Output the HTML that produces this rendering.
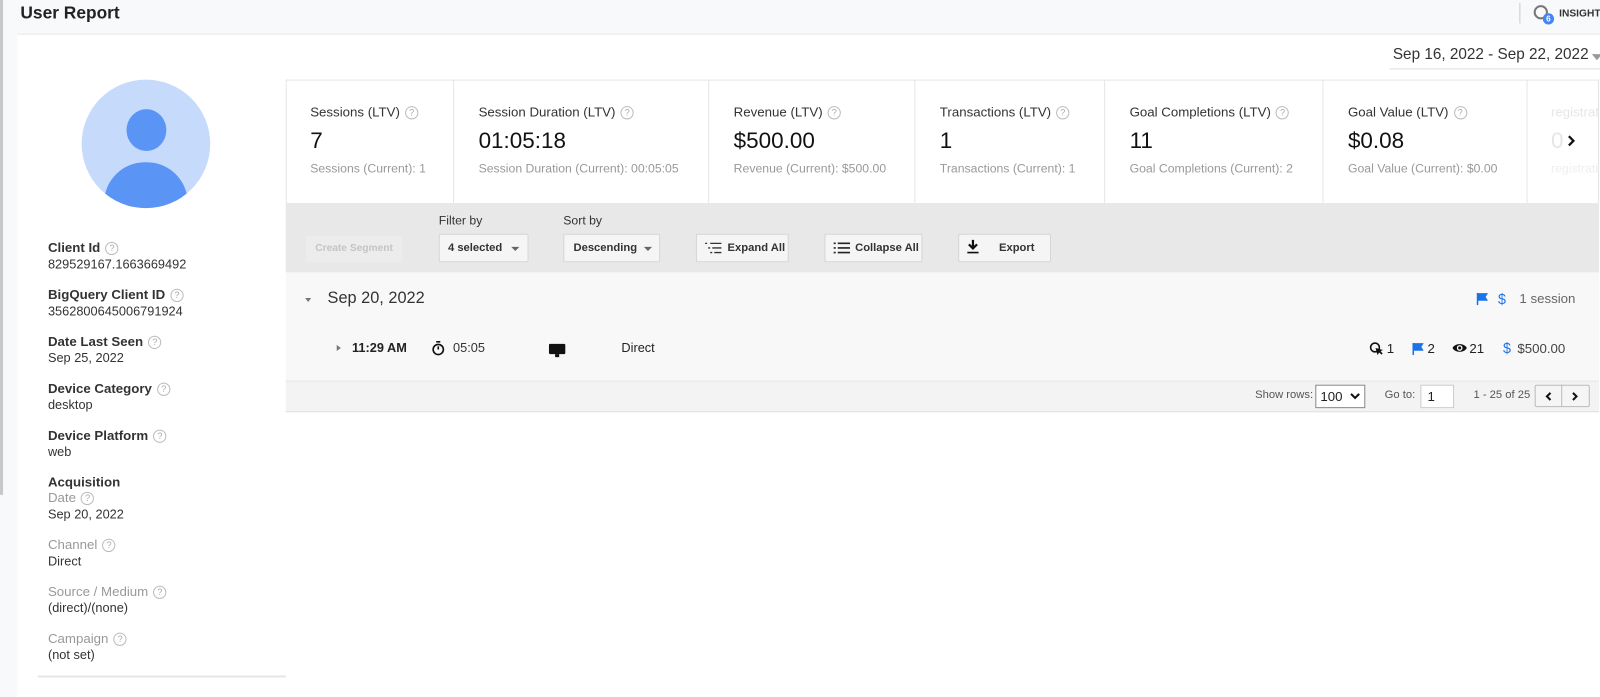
<!DOCTYPE html>
<html><head><meta charset="utf-8"><style>
*{box-sizing:border-box;margin:0;padding:0}
body{width:1600px;height:683px;overflow:hidden;background:#f8f9fa;font-family:"Liberation Sans",Arial,sans-serif;color:#212121;position:relative}
#w{position:absolute;left:0;top:0;width:1568px;height:670px;transform:scale(1.0204);transform-origin:0 0}
.a{position:absolute;white-space:nowrap}
.q{display:inline-block;width:13px;height:13px;border:1px solid #bbb;border-radius:50%;font-size:9px;line-height:11px;text-align:center;color:#aaa;font-weight:normal;vertical-align:1px;margin-left:5px}
.lab{font-size:13px;font-weight:bold;color:#333}
.val{font-size:12.5px;color:#333}
.glab{font-size:13px;color:#999}
.st{position:absolute;top:78px;height:121px;border-right:1px solid #e6e6e6}
.st .t{position:absolute;left:24px;top:24px;font-size:13px;color:#333;white-space:nowrap}
.st .v{position:absolute;left:24px;top:47px;font-size:22px;color:#111;white-space:nowrap}
.st .c{position:absolute;left:24px;top:80px;font-size:12px;color:#999;white-space:nowrap}
.btn{position:absolute;top:229px;height:28px;background:#f5f5f5;border:1px solid #d6d6d6;border-radius:2px;font-size:11px;font-weight:bold;color:#333;line-height:26px;white-space:nowrap}
.tri{position:absolute;width:0;height:0;border-left:4px solid transparent;border-right:4px solid transparent;border-top:4px solid #666}
svg{position:absolute}
</style></head><body><div id="w">
<div class="a" style="left:0;top:0;width:3px;height:485px;background:#c8c8c8"></div>
<div class="a" style="left:20px;top:3px;font-size:17px;font-weight:bold;color:#222">User Report</div>
<div class="a" style="left:1489px;top:3px;width:1px;height:20px;background:#ccc"></div>
<div class="a" style="left:1503px;top:5px;width:14px;height:14px;border:2px solid #777;border-radius:50%"></div>
<div class="a" style="left:1512px;top:13px;width:11px;height:11px;background:#4285f4;border-radius:50%;color:#fff;font-size:8px;text-align:center;line-height:11px;font-weight:bold">6</div>
<div class="a" style="left:1528px;top:8px;font-size:10px;font-weight:bold;color:#333">INSIGHTS</div>
<div class="a" style="left:17px;top:33px;width:1583px;height:650px;background:#fff;border-top:1px solid #e8e8e8"></div>
<div class="a" style="left:1362px;top:45px;width:238px;height:23px;border-bottom:1px solid #ddd;font-size:15px;color:#333;padding-left:3px">Sep 16, 2022 - Sep 22, 2022</div>
<div class="tri" style="left:1560px;top:53px;border-top:6px solid #999;border-left-width:5px;border-right-width:5px"></div>
<div class="a" style="left:80px;top:78px;width:126px;height:126px;border-radius:50%;background:#c6dafc;overflow:hidden">
<div class="a" style="left:44px;top:29px;width:39px;height:41px;border-radius:50%;background:#5a95f5"></div>
<div class="a" style="left:22px;top:81px;width:82px;height:60px;border-radius:40px 40px 0 0;background:#5a95f5"></div>
</div>
<div class="a lab" style="left:47px;top:235px">Client Id<span class="q">?</span></div>
<div class="a val" style="left:47px;top:252px">829529167.1663669492</div>
<div class="a lab" style="left:47px;top:281px">BigQuery Client ID<span class="q">?</span></div>
<div class="a val" style="left:47px;top:298px">3562800645006791924</div>
<div class="a lab" style="left:47px;top:327px">Date Last Seen<span class="q">?</span></div>
<div class="a val" style="left:47px;top:344px">Sep 25, 2022</div>
<div class="a lab" style="left:47px;top:373px">Device Category<span class="q">?</span></div>
<div class="a val" style="left:47px;top:390px">desktop</div>
<div class="a lab" style="left:47px;top:419px">Device Platform<span class="q">?</span></div>
<div class="a val" style="left:47px;top:436px">web</div>
<div class="a lab" style="left:47px;top:465px">Acquisition</div>
<div class="a glab" style="left:47px;top:480px">Date<span class="q">?</span></div>
<div class="a val" style="left:47px;top:497px">Sep 20, 2022</div>
<div class="a glab" style="left:47px;top:526px">Channel<span class="q">?</span></div>
<div class="a val" style="left:47px;top:543px">Direct</div>
<div class="a glab" style="left:47px;top:572px">Source / Medium<span class="q">?</span></div>
<div class="a val" style="left:47px;top:589px">(direct)/(none)</div>
<div class="a glab" style="left:47px;top:618px">Campaign<span class="q">?</span></div>
<div class="a val" style="left:47px;top:635px">(not set)</div>
<div class="a" style="left:37px;top:662px;width:243px;height:2px;background:#e6e6e6"></div>
<div class="a" style="left:280px;top:78px;width:1287px;height:121px;border:1px solid #e6e6e6;border-bottom:none"></div>
<div class="st" style="left:280px;width:165px"><div class="t">Sessions (LTV)<span class="q">?</span></div><div class="v">7</div><div class="c">Sessions (Current): 1</div></div>
<div class="st" style="left:445px;width:250px"><div class="t">Session Duration (LTV)<span class="q">?</span></div><div class="v">01:05:18</div><div class="c">Session Duration (Current): 00:05:05</div></div>
<div class="st" style="left:695px;width:202px"><div class="t">Revenue (LTV)<span class="q">?</span></div><div class="v">$500.00</div><div class="c">Revenue (Current): $500.00</div></div>
<div class="st" style="left:897px;width:186px"><div class="t">Transactions (LTV)<span class="q">?</span></div><div class="v">1</div><div class="c">Transactions (Current): 1</div></div>
<div class="st" style="left:1083px;width:214px"><div class="t">Goal Completions (LTV)<span class="q">?</span></div><div class="v">11</div><div class="c">Goal Completions (Current): 2</div></div>
<div class="st" style="left:1297px;width:200px"><div class="t">Goal Value (LTV)<span class="q">?</span></div><div class="v">$0.08</div><div class="c">Goal Value (Current): $0.00</div></div>
<div class="st" style="left:1497px;width:70px;overflow:hidden"><div class="t" style="left:23px;color:#e6e6e6">registrations</div><div class="v" style="left:23px;color:#e6e6e6">0</div><div class="c" style="left:23px;color:#eee">registrations</div></div>
<svg style="left:1536px;top:132px" width="8" height="12" viewBox="0 0 8 12"><path d="M1.5 1.5 L6 6 L1.5 10.5" stroke="#111" stroke-width="2.2" fill="none"/></svg>
<div class="a" style="left:280px;top:199px;width:1287px;height:68px;background:#e8e8e8"></div>
<div class="a" style="left:300px;top:231px;width:94px;height:26px;background:#ececec;font-size:10px;color:#c4c4c4;text-align:center;line-height:26px;font-weight:bold">Create Segment</div>
<div class="a" style="left:430px;top:209px;font-size:12px;color:#333">Filter by</div>
<div class="btn" style="left:430px;width:88px;padding-left:8px">4 selected</div>
<div class="tri" style="left:501px;top:242px"></div>
<div class="a" style="left:552px;top:209px;font-size:12px;color:#333">Sort by</div>
<div class="btn" style="left:552px;width:95px;padding-left:9px">Descending</div>
<div class="tri" style="left:631px;top:242px"></div>
<div class="btn" style="left:682px;width:91px;padding-left:30px">Expand All</div>
<svg style="left:690px;top:237px" width="18" height="12" viewBox="0 0 18 12"><path d="M1 1.5h2M6 1.5h11M4 6h2M8 6h9M6 10.5h2M10 10.5h7" stroke="#333" stroke-width="1.3"/></svg>
<div class="btn" style="left:808px;width:96px;padding-left:29px">Collapse All</div>
<svg style="left:816px;top:237px" width="18" height="12" viewBox="0 0 18 12"><path d="M1 1.5h2M5 1.5h12M1 6h2M5 6h12M1 10.5h2M5 10.5h12" stroke="#222" stroke-width="1.6"/></svg>
<div class="btn" style="left:939px;width:91px;padding-left:39px">Export</div>
<svg style="left:947px;top:235px" width="13" height="14" viewBox="0 0 13 14"><path d="M6.5 0v7M2.5 4.5l4 4 4-4" stroke="#111" stroke-width="2.2" fill="none"/><path d="M1 12.5h11" stroke="#111" stroke-width="1.6"/></svg>
<div class="a" style="left:280px;top:267px;width:1287px;height:106px;background:#f8f8f8"></div>
<div class="tri" style="left:299px;top:292px;border-width:4px 3px 0 3px;border-top-color:#777"></div>
<div class="a" style="left:321px;top:284px;font-size:16px;color:#333">Sep 20, 2022</div>
<svg style="left:1447px;top:287px" width="11" height="12" viewBox="0 0 11 12"><path d="M1 0v12M1 1h9l-2 3 2 3H1z" stroke="#1a73e8" fill="#1a73e8" stroke-width="1.5"/></svg>
<div class="a" style="left:1468px;top:285px;font-size:14px;color:#1a73e8">$</div>
<div class="a" style="left:1489px;top:285px;font-size:13px;color:#666">1 session</div>
<div class="a" style="left:330px;top:338px;width:0;height:0;border-top:3px solid transparent;border-bottom:3px solid transparent;border-left:4px solid #777"></div>
<div class="a" style="left:345px;top:334px;font-size:12.5px;font-weight:bold;color:#222">11:29 AM</div>
<svg style="left:423px;top:334px" width="13" height="15" viewBox="0 0 13 15"><path d="M4.5 1h4" stroke="#111" stroke-width="1.6"/><circle cx="6.5" cy="8.5" r="5" stroke="#111" stroke-width="1.6" fill="none"/><path d="M6.5 8.5V5.5" stroke="#111" stroke-width="1.6"/></svg>
<div class="a" style="left:444px;top:334px;font-size:12.5px;color:#333">05:05</div>
<div class="a" style="left:538px;top:337px;width:16px;height:10px;background:#111;border-radius:1px"></div>
<div class="a" style="left:544px;top:347px;width:4px;height:3px;background:#111"></div>
<div class="a" style="left:609px;top:334px;font-size:12.5px;color:#222">Direct</div>
<svg style="left:1342px;top:335px" width="14" height="14" viewBox="0 0 14 14"><circle cx="5.5" cy="5.5" r="4.3" stroke="#111" stroke-width="1.6" fill="none"/><path d="M6 6l2 7 1.5-2.5 2.5 2 1-1-2-2.5 2.5-1z" fill="#111"/></svg>
<div class="a" style="left:1359px;top:334px;font-size:13px;color:#222">1</div>
<svg style="left:1384px;top:336px" width="11" height="12" viewBox="0 0 11 12"><path d="M1 0v12M1 1h9l-2 3 2 3H1z" stroke="#1a73e8" fill="#1a73e8" stroke-width="1.5"/></svg>
<div class="a" style="left:1399px;top:334px;font-size:13px;color:#222">2</div>
<svg style="left:1423px;top:336px" width="15" height="10" viewBox="0 0 15 10"><path d="M0.5 5C3 0 12 0 14.5 5C12 10 3 10 0.5 5z" fill="#111"/><circle cx="7.5" cy="5" r="2.8" fill="#fff"/><circle cx="7.5" cy="5" r="1.5" fill="#111"/></svg>
<div class="a" style="left:1440px;top:334px;font-size:13px;color:#222">21</div>
<div class="a" style="left:1473px;top:333px;font-size:14px;color:#1a73e8">$</div>
<div class="a" style="left:1487px;top:334px;font-size:13px;color:#444">$500.00</div>
<div class="a" style="left:280px;top:373px;width:1287px;height:31px;background:#f3f3f3;border-top:1px solid #e6e6e6;border-bottom:1px solid #e0e0e0"></div>
<div class="a" style="left:1230px;top:381px;font-size:11px;color:#555">Show rows:</div>
<div class="a" style="left:1289px;top:377px;width:49px;height:23px;border:1px solid #888;background:#fff;font-size:13px;line-height:21px;padding-left:4px">100</div>
<svg style="left:1323px;top:385px" width="10" height="7" viewBox="0 0 10 7"><path d="M1 1l4 4 4-4" stroke="#111" stroke-width="2" fill="none"/></svg>
<div class="a" style="left:1357px;top:381px;font-size:11px;color:#555">Go to:</div>
<div class="a" style="left:1392px;top:377px;width:33px;height:23px;border:1px solid #ccc;background:#fff;font-size:13px;line-height:21px;padding-left:6px">1</div>
<div class="a" style="left:1444px;top:381px;font-size:11px;color:#555">1 - 25 of 25</div>
<div class="a" style="left:1504px;top:377px;width:54px;height:22px;border:1px solid #bbb;border-radius:2px;background:#f5f5f5"></div>
<div class="a" style="left:1530px;top:377px;width:1px;height:22px;background:#bbb"></div>
<svg style="left:1514px;top:384px" width="7" height="9" viewBox="0 0 7 9"><path d="M5.5 1L2 4.5 5.5 8" stroke="#111" stroke-width="2" fill="none"/></svg>
<svg style="left:1540px;top:384px" width="7" height="9" viewBox="0 0 7 9"><path d="M1.5 1L5 4.5 1.5 8" stroke="#111" stroke-width="2" fill="none"/></svg>
</div></body></html>
